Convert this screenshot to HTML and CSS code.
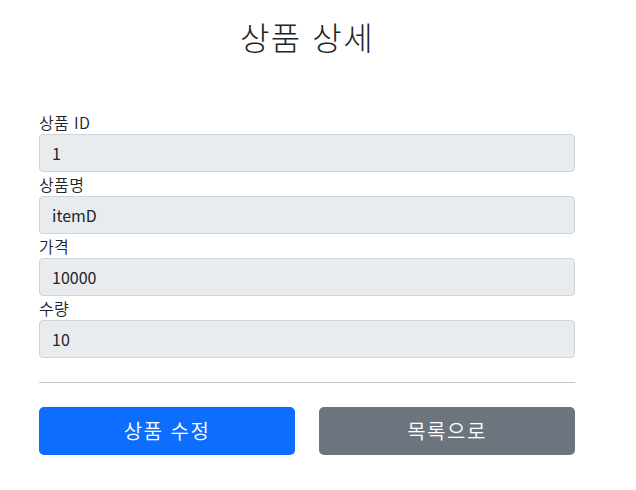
FILE: index.html
```html
<!DOCTYPE html>
<html lang="ko">
<head>
<meta charset="utf-8">
<link rel="stylesheet" href="styles.css">
</head>
<body>
<div class="container">
  <div class="header"><h2>상품 상세</h2></div>
  <form class="form">
    <div class="field">
      <label for="itemId">상품 ID</label>
      <input id="itemId" class="input" type="text" value="1" readonly>
    </div>
    <div class="field">
      <label for="itemName">상품명</label>
      <input id="itemName" class="input" type="text" value="itemD" readonly>
    </div>
    <div class="field">
      <label for="price">가격</label>
      <input id="price" class="input" type="text" value="10000" readonly>
    </div>
    <div class="field">
      <label for="quantity">수량</label>
      <input id="quantity" class="input" type="text" value="10" readonly>
    </div>
    <hr class="divider">
    <div class="buttons">
      <button type="button" class="btn btn-primary">상품 수정</button>
      <button type="button" class="btn btn-secondary">목록으로</button>
    </div>
  </form>
</div>
</body>
</html>
```
FILE: styles.css
```css
* { box-sizing: border-box; }
html, body { margin: 0; padding: 0; background: #fff; }
body {
  font-family: "Noto Sans CJK KR", "Noto Sans", "Liberation Sans", sans-serif;
  font-size: 16px;
  line-height: 1.5;
  color: #212529;
}
.container {
  width: 560px;
  margin-left: 27px;
  padding: 0 12px;
}
.header {
  padding-top: 17px;
  text-align: center;
  height: 110px;
}
.header h2 {
  margin: 0;
  font-size: 32px;
  font-weight: 300;
  line-height: 38px;
  letter-spacing: 1.5px;
}
.field { display: flex; flex-direction: column; }
.field label {
  display: block;
  height: 24px;
  line-height: 24px;
  font-weight: 350;
  letter-spacing: 0.4px;
}
.input {
  display: block;
  width: 100%;
  height: 38px;
  padding: 6px 12px;
  font: inherit;
  font-size: 16px;
  color: #212529;
  background: #e9ecef;
  border: 1px solid #ced4da;
  border-radius: 4px;
  outline: none;
}
.divider {
  margin: 24px 0;
  border: 0;
  border-top: 1px solid #c4c4c4;
  height: 0;
}
.buttons {
  display: grid;
  grid-template-columns: 1fr 1fr;
  gap: 24px;
}
.btn {
  height: 48px;
  border: 0;
  border-radius: 5px;
  font: inherit;
  font-size: 20px;
  font-weight: 350;
  letter-spacing: 1.5px;
  color: #fff;
  cursor: pointer;
}
.btn-primary { background: #0d6efd; }
.btn-secondary { background: #6c757d; }
```
